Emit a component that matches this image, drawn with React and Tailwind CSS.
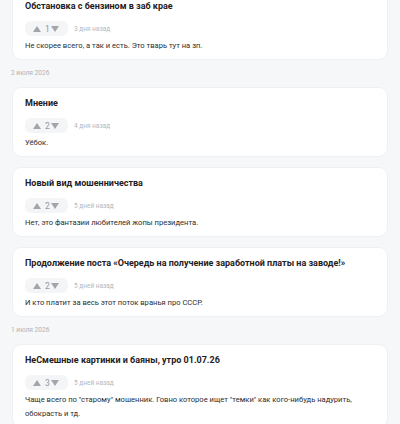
const items = [
  { type: 'comment', title: 'Обстановка с бензином в заб крае', votes: 1, time: '3 дня назад', text: 'Не скорее всего, а так и есть. Это тварь тут на зп.', first: true },
  { type: 'date', label: '2 июля 2026' },
  { type: 'comment', title: 'Мнение', votes: 2, time: '4 дня назад', text: 'Уёбок.' },
  { type: 'comment', title: 'Новый вид мошенничества', votes: 2, time: '5 дней назад', text: 'Нет, это фантазии любителей жопы президента.' },
  { type: 'comment', title: 'Продолжение поста «Очередь на получение заработной платы на заводе!»', votes: 2, time: '5 дней назад', text: 'И кто платит за весь этот поток вранья про СССР.' },
  { type: 'date', label: '1 июля 2026' },
  { type: 'comment', title: 'НеСмешные картинки и баяны, утро 01.07.26', votes: 3, time: '5 дней назад', text: 'Чаще всего по "старому" мошенник. Говно которое ищет "темки" как кого-нибудь надурить, обокрасть и тд.' },
];

function Triangle({ up }) {
  return (
    <svg width="8" height="6" viewBox="0 0 8 6" className="shrink-0">
      <path d={up ? 'M4 0 L8 6 L0 6 Z' : 'M0 0 L8 0 L4 6 Z'} fill="#a3a5aa" />
    </svg>
  );
}

function CommentCard({ item }) {
  return (
    <div className={`bg-white rounded-[9px] border border-[#eef0f3] px-[12px] pt-[9px] pb-[6px] ${item.first ? '-mt-[10px]' : ''}`}>
      <div className="text-[9px] leading-[12px] font-bold text-[#1f2023]">{item.title}</div>
      <div className="flex items-center mt-[9px]">
        <div className="flex items-center h-[15px] bg-[#f4f5f7] rounded-[6px] pl-[8px] pr-[9px]">
          <Triangle up />
          <span className="ml-[4px] w-[6px] text-[8.5px] leading-[10px] text-[#95979c]">{item.votes}</span>
          <Triangle />
        </div>
        <span className="ml-[6px] text-[6.5px] leading-[10px] text-[#b5b7bc]">{item.time}</span>
      </div>
      <div className="mt-[3px] text-[7.6px] leading-[14px] text-[#2c2d30]">{item.text}</div>
    </div>
  );
}

export default function App() {
  return (
    <div className="h-[424px] overflow-hidden bg-[#f6f7f9] px-[12px] font-['Roboto',sans-serif]">
      <div className="flex flex-col">
        {items.map((item, i) =>
          item.type === 'date' ? (
            <div key={i} className="pt-[7px] pb-[8px] -ml-[1px] text-[6.6px] leading-[12px] text-[#b0b3b8]">{item.label}</div>
          ) : (
            <div key={i} className={i > 0 && items[i - 1].type === 'comment' ? 'mt-[10px]' : ''}>
              <CommentCard item={item} />
            </div>
          )
        )}
      </div>
    </div>
  );
}
